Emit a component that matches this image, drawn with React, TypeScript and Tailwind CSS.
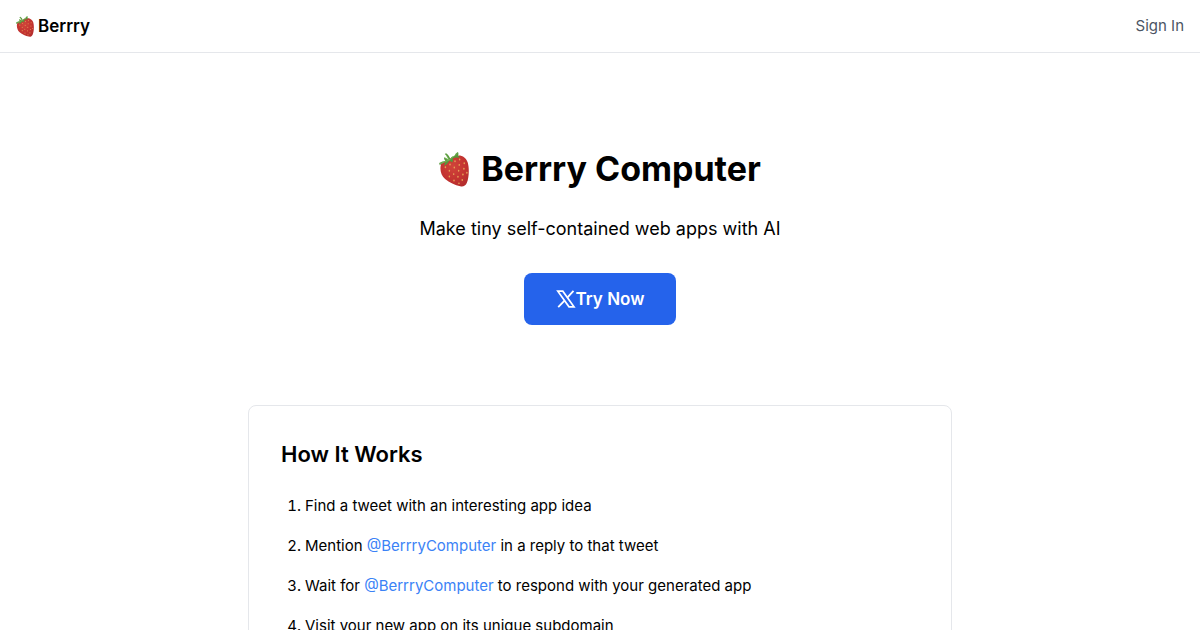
import type { ReactNode } from "react";

const SEEDS = [
  [33, 38], [48, 28], [62, 23], [19, 46], [61, 39], [76, 34], [46, 47],
  [31, 57], [75, 51], [59, 57], [44, 67], [31, 74], [72, 68], [57, 75],
  [45, 86], [70, 85], [60, 95], [84, 63],
];

function Handle() {
  return (
    <a href="#berrrycomputer" className="text-[#3b82f6] hover:underline">
      @BerrryComputer
    </a>
  );
}

const STEPS: ReactNode[] = [
  "Find a tweet with an interesting app idea",
  <>Mention <Handle /> in a reply to that tweet</>,
  <>Wait for <Handle /> to respond with your generated app</>,
  "Visit your new app on its unique subdomain",
];

function Strawberry({ className, id }: { className: string; id: string }) {
  return (
    <svg viewBox="0 0 90 106" className={className} aria-hidden="true">
      <defs>
        <radialGradient id={id} cx="0.45" cy="0.35" r="0.7">
          <stop offset="0" stopColor="#d0443a" />
          <stop offset="0.6" stopColor="#c43431" />
          <stop offset="1" stopColor="#b42d2d" />
        </radialGradient>
      </defs>
      <path
        d="M6 36C17 28 27 23 36 18C45 12 57 9 68 12C80 16 88 28 89 44C91 62 89 81 84 93C80 102 73 106 64 104C48 101 31 93 18 82C5 71 1 51 6 36Z"
        fill={`url(#${id})`}
      />
      {SEEDS.map(([x, y]) => (
        <ellipse key={`${x}-${y}`} cx={x} cy={y} rx="2.3" ry="3" fill="#e6a456" />
      ))}
      <path
        d="M0 33C7 29 13 28 19 27C16 24 14 20 15 17C21 18 25 21 28 24C26 16 22 10 17 6L21 4C28 9 32 15 34 21C37 14 42 12 47 12C48 7 52 2 57 0C59 4 59 8 57 12C60 13 62 15 61 18C54 16 46 17 41 20C43 24 42 28 39 32C35 29 33 27 31 26C28 33 23 38 16 42C15 37 18 33 20 30C13 33 6 36 2 40Z"
        fill="#55983c"
      />
      <path d="M16 18L31 24L56 3M31 24L19 6M31 24L3 35" fill="none" stroke="#86bd63" strokeWidth="2" />
    </svg>
  );
}

function XLogo() {
  return (
    <svg viewBox="0 0 20 20" className="h-5 w-5" fill="none" stroke="currentColor" aria-hidden="true">
      <path d="M1.8 2.2H6.8L18 17.8H13L1.8 2.2Z" strokeWidth="1.7" />
      <path d="M17.5 1.8L11.3 8.6M8.8 11.3L2.2 18.2" strokeWidth="1.8" />
    </svg>
  );
}

export default function App() {
  return (
    <div className="min-h-screen bg-white font-['Inter',sans-serif] text-[15px] leading-6 text-black">
      <header className="flex items-center justify-between border-b border-[#e5e7eb] px-4 py-3">
        <a href="#home" className="flex items-center gap-1 text-[17px] leading-7 font-semibold">
          <Strawberry id="berry-nav" className="h-[21px] w-[18px]" />
          Berrry
        </a>
        <a href="#signin" className="text-[#4b5563]">Sign In</a>
      </header>

      <main className="mx-auto max-w-3xl px-8 pt-24 pb-12">
        <section className="mb-20 flex flex-col items-center text-center">
          <h1 className="mb-6 flex items-center gap-3 text-[34px] leading-10 font-bold">
            <Strawberry id="berry-hero" className="h-[35px] w-[30px]" />
            Berrry Computer
          </h1>
          <p className="mb-7 text-[18px] leading-8">Make tiny self-contained web apps with AI</p>
          <button type="button" className="flex items-center rounded-lg bg-[#2563eb] px-8 py-3 text-[17px] leading-7 font-semibold text-white">
            <XLogo />
            Try Now
          </button>
        </section>

        <section className="rounded-lg border border-[#e5e7eb] p-8">
          <h2 className="mb-6 text-[22px] leading-8 font-semibold">How It Works</h2>
          <ol className="list-decimal space-y-4 pl-6">
            {STEPS.map((step, i) => (
              <li key={i}>{step}</li>
            ))}
          </ol>
        </section>
      </main>
    </div>
  );
}
